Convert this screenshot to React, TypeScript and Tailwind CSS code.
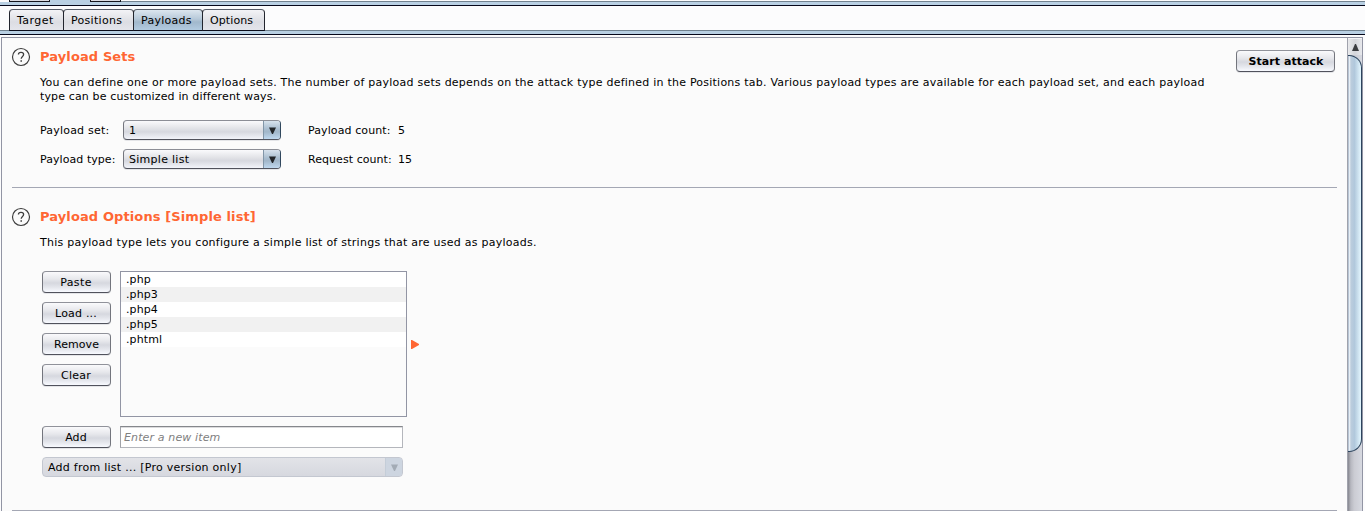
import React from "react";

function Help() {
  return (
    <svg width="20" height="20" viewBox="0 0 20 20" className="-ml-px shrink-0">
      <circle cx="10" cy="10" r="8.5" fill="none" stroke="#3c3c3c" strokeWidth="1.15" />
      <path
        d="M7.4 7.5C7.5 6 8.6 5.4 10 5.4c1.5 0 2.6.8 2.6 2.1 0 1.9-2.4 2-2.4 4.3"
        fill="none"
        stroke="#3c3c3c"
        strokeWidth="1.3"
      />
      <rect x="9.5" y="13.2" width="1.4" height="1.6" fill="#3c3c3c" />
    </svg>
  );
}

function Title({ children, className = "" }: { children: React.ReactNode; className?: string }) {
  return (
    <h2 className={`text-[13px] leading-[16px] font-bold tracking-[0.11px] text-[#ff6633] ${className}`}>{children}</h2>
  );
}

function Button({ label, className = "" }: { label: string; className?: string }) {
  return (
    <button
      className={`flex h-[22px] items-center justify-center rounded-[4px] border border-t-[#90929a] border-r-[#73757d] border-b-[#50525c] border-l-[#73757d] bg-[linear-gradient(#fafafc_0%,#e7e8ec_35%,#d6d8df_55%,#e3e5eb_75%,#f8faff_100%)] pt-[2px] leading-[14px] shadow-[0_1px_0_#e4e5e8] ${className}`}
    >
      {label}
    </button>
  );
}

function Select({ value, className = "" }: { value: string; className?: string }) {
  return (
    <div className="flex h-[20px] w-[158px] overflow-hidden rounded-[4px] border border-t-[#8c8e96] border-r-[#30475d] border-b-[#50525c] border-l-[#73757d] bg-[linear-gradient(#fafafc_0%,#e3e4e8_40%,#d6d8df_60%,#f2f4fa_100%)] shadow-[0_1px_0_#e4e5e8]">
      <span className={`flex-1 pl-[5px] leading-[20px] ${className}`}>{value}</span>
      <span className="flex w-[17px] items-center justify-center border-l border-[#8296a8] bg-[linear-gradient(#d7e2ec_0%,#a9bdcf_45%,#a1b6c9_60%,#bfd8ef_100%)]">
        <svg width="7" height="7" viewBox="0 0 7 7">
          <path d="M0 0.5h7L4 7H3z" fill="#232629" />
        </svg>
      </span>
    </div>
  );
}

function Tab({ label, active, className }: { label: string; active?: boolean; className: string }) {
  return (
    <div
      className={`h-[22px] rounded-t-[4px] border border-t-[#565c68] border-r-[#22252e] border-b-[#0c0e1c] border-l-[#22252e] pl-[7px] leading-[21px] whitespace-nowrap ${
        active
          ? "bg-[linear-gradient(#dce6ef_0%,#b7c9d9_45%,#a1b8cc_60%,#b2cbe0_100%)]"
          : "bg-[linear-gradient(#f3f3f6_0%,#e2e3e8_45%,#dcdde3_60%,#e4e5eb_100%)]"
      } ${className}`}
    >
      {label}
    </div>
  );
}

const items = [".php", ".php3", ".php4", ".php5", ".phtml"];

export default function App() {
  return (
    <div className="flex h-[511px] w-[1365px] flex-col overflow-hidden bg-[#fcfcfd] font-['DejaVu_Sans',sans-serif] text-[11px] text-black">
      <div className="flex h-[2px] shrink-0 pl-[9px]">
        <div className="w-[41px] border-x border-b border-[#15171f] bg-[#dcdde3]" />
        <div className="w-[40px] bg-[#b9d0e3]" />
        <div className="w-[31px] border-x border-b border-[#15171f] bg-[#dcdde3]" />
        <div className="flex-1 border-b border-[#72828f]" />
      </div>
      <div className="h-[4px] shrink-0 border-b border-[#05071a] bg-[#b9d0e3]" />
      <div className="relative h-[29px] shrink-0">
        <div className="absolute inset-x-0 top-[24px] h-[5px] border-t border-b border-t-[#72828f] border-b-[#05071a] bg-[#b9d0e3]" />
        <div className="relative flex pt-[3px] pl-[9px]">
          <Tab label="Target" className="w-[55px] tracking-[0.45px]" />
          <Tab label="Positions" className="-ml-px w-[71px] tracking-[0.3px]" />
          <Tab label="Payloads" active className="-ml-px w-[70px] tracking-[0.25px]" />
          <Tab label="Options" className="-ml-px w-[63px] tracking-[0.1px]" />
        </div>
      </div>
      <div className="mt-[2px] ml-px flex min-h-0 w-[1362px] flex-1 border-t border-r border-l border-[#9295a4]">
        <main className="flex w-[1345px] shrink-0 flex-col bg-[#fbfbfb] pl-[10px]">
          <section className="flex h-[150px] w-[1325px] shrink-0 border-b border-[#a4a7b4] pt-[9px]">
            <Help />
            <div className="ml-[9px] w-[1170px] shrink-0">
              <Title className="mt-[2px]">Payload Sets</Title>
              <p className="mt-[11px] leading-[14px] whitespace-nowrap">
                <span className="tracking-[0.232px]">You can define one or more payload sets. The number of payload sets depends on the attack type defined in the Positions tab. Various payload types are available for each payload set, and each payload</span>
                <br />
                <span className="tracking-[0.14px]">type can be customized in different ways.</span>
              </p>
              <div className="mt-[16px] grid grid-cols-[83px_185px_90px_100px] gap-y-[9px] leading-[22px] whitespace-nowrap">
                <span className="h-[20px] tracking-[0.2px]">Payload set:</span>
                <Select value="1" />
                <span className="h-[20px] tracking-[0.1px]">Payload count:</span>
                <span className="h-[20px]">5</span>
                <span className="h-[20px] tracking-[0.06px]">Payload type:</span>
                <Select value="Simple list" className="tracking-[0.28px]" />
                <span className="h-[20px] tracking-[0.06px]">Request count:</span>
                <span className="h-[20px]">15</span>
              </div>
            </div>
            <Button label="Start attack" className="mt-[3px] ml-[26px] w-[99px] shrink-0 pl-px font-bold tracking-[0.05px]" />
          </section>
          <section className="flex h-[323px] w-[1325px] shrink-0 border-b border-[#a4a7b4] pt-[19px]">
            <Help />
            <div className="ml-[9px]">
              <Title className="mt-[2px]">Payload Options [Simple list]</Title>
              <p className="mt-[11px] leading-[14px] tracking-[0.258px]">This payload type lets you configure a simple list of strings that are used as payloads.</p>
              <div className="mt-[21px] ml-[2px] flex">
                <div className="flex w-[69px] flex-col gap-[9px]">
                  <Button label="Paste" className="pr-px tracking-[0.4px]" />
                  <Button label="Load ..." className="pr-px tracking-[0.2px]" />
                  <Button label="Remove" className="tracking-[0.05px]" />
                  <Button label="Clear" className="pr-px tracking-[0.2px]" />
                </div>
                <ul className="ml-[9px] h-[146px] w-[287px] border border-[#9295a4]">
                  {items.map((item) => (
                    <li key={item} className="h-[15px] bg-white pl-[5px] leading-[15px] tracking-[0.1px] even:bg-[#f1f1f1]">
                      {item}
                    </li>
                  ))}
                </ul>
                <svg width="8" height="9" viewBox="0 0 8 9" className="mt-[69px] ml-[4px]">
                  <path d="M0 0h1l7 4v1L1 9H0z" fill="#ff6633" />
                </svg>
              </div>
              <div className="mt-[9px] ml-[2px] flex">
                <Button label="Add" className="w-[69px] pr-px tracking-[0.1px]" />
                <div className="ml-[9px] h-[22px] w-[283px] border border-t-[#85878c] border-r-[#b4b6bc] border-b-[#b4b6bc] border-l-[#a0a2a8] bg-white pl-[3px] leading-[22px] tracking-[0.13px] text-[#808080] italic shadow-[inset_0_1px_0_#dcdcde]">
                  Enter a new item
                </div>
              </div>
              <div className="mt-[9px] ml-[2px] flex h-[20px] w-[361px] overflow-hidden rounded-[4px] border border-[#c3c7d0] bg-[linear-gradient(#e2e3e8,#d6d8df)]">
                <span className="flex-1 pl-[5px] leading-[20px] tracking-[0.26px]">Add from list ... [Pro version only]</span>
                <span className="flex w-[17px] items-center justify-center border-l border-[#c4cdd8] bg-[#cdd5e0]">
                  <svg width="7" height="7" viewBox="0 0 7 7">
                    <path d="M0 0.5h7L4 7H3z" fill="#a3abb5" />
                  </svg>
                </span>
              </div>
            </div>
          </section>
        </main>
        <div className="flex w-[15px] shrink-0 flex-col border-l border-[#a0a2ac] bg-[linear-gradient(90deg,#85868e_0%,#b7b8c0_20%,#cbccd3_45%,#d7d9e1_100%)]">
          <div className="flex h-[17px] shrink-0 items-center justify-center border-t border-[#f4f4f6] bg-[linear-gradient(90deg,#e9eaec,#d4d5da_50%,#e8e9ed)]">
            <svg width="7" height="7" viewBox="0 0 7 7">
              <path d="M0 7h7L4 0H3z" fill="#3b3d40" />
            </svg>
          </div>
          <div className="h-[397px] w-[14px] shrink-0 rounded-r-[13px] border-t border-r border-b border-[#2c445d] bg-[linear-gradient(90deg,#9fb1c5_0%,#eaf0f6_12%,#bccddd_22%,#b1c8dc_50%,#e4f7ff_100%)]" />
        </div>
      </div>
    </div>
  );
}
